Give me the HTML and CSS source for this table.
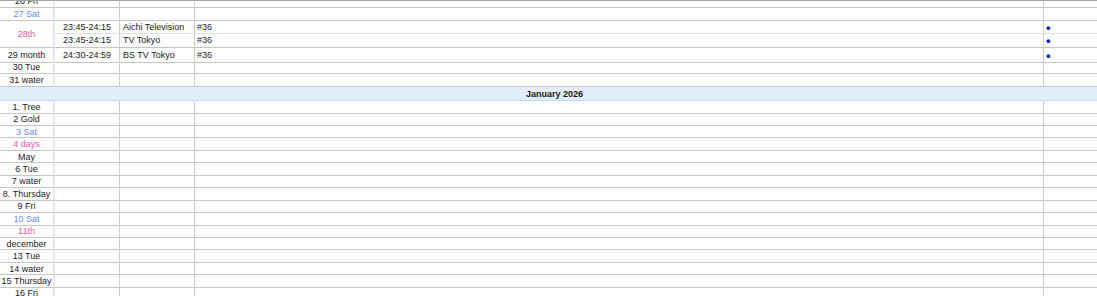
FILE: index.html
```html
<!DOCTYPE html>
<html>
<head>
<meta charset="utf-8">
<link rel="stylesheet" href="styles.css">
</head>
<body>
<div class="freeze"></div>
<div class="sheet">
  <div class="row tall"><div class="c date">26 Fri</div><div class="c t"></div><div class="c st"></div><div class="c ep"></div><div class="c mk"></div></div>
  <div class="row tall"><div class="c date sat">27 Sat</div><div class="c t"></div><div class="c st"></div><div class="c ep"></div><div class="c mk"></div></div>
  <div class="group">
    <div class="c date sun span2">28th</div>
    <div class="c t soft">23:45-24:15</div><div class="c st soft">Aichi Television</div><div class="c ep soft">#36</div><div class="c mk soft">•</div>
    <div class="c t">23:45-24:15</div><div class="c st">TV Tokyo</div><div class="c ep">#36</div><div class="c mk">•</div>
  </div>
  <div class="row tall"><div class="c date">29 month</div><div class="c t">24:30-24:59</div><div class="c st">BS TV Tokyo</div><div class="c ep">#36</div><div class="c mk">•</div></div>
  <div class="row tall"><div class="c date">30 Tue</div><div class="c t"></div><div class="c st"></div><div class="c ep"></div><div class="c mk"></div></div>
  <div class="row tall"><div class="c date">31 water</div><div class="c t"></div><div class="c st"></div><div class="c ep"></div><div class="c mk"></div></div>
  <div class="month">January 2026</div>
  <div class="row"><div class="c date">1. Tree</div><div class="c t"></div><div class="c st"></div><div class="c ep"></div><div class="c mk"></div></div>
  <div class="row"><div class="c date">2 Gold</div><div class="c t"></div><div class="c st"></div><div class="c ep"></div><div class="c mk"></div></div>
  <div class="row"><div class="c date sat">3 Sat</div><div class="c t"></div><div class="c st"></div><div class="c ep"></div><div class="c mk"></div></div>
  <div class="row"><div class="c date sun">4 days</div><div class="c t"></div><div class="c st"></div><div class="c ep"></div><div class="c mk"></div></div>
  <div class="row"><div class="c date">May</div><div class="c t"></div><div class="c st"></div><div class="c ep"></div><div class="c mk"></div></div>
  <div class="row"><div class="c date">6 Tue</div><div class="c t"></div><div class="c st"></div><div class="c ep"></div><div class="c mk"></div></div>
  <div class="row"><div class="c date">7 water</div><div class="c t"></div><div class="c st"></div><div class="c ep"></div><div class="c mk"></div></div>
  <div class="row"><div class="c date">8. Thursday</div><div class="c t"></div><div class="c st"></div><div class="c ep"></div><div class="c mk"></div></div>
  <div class="row"><div class="c date">9 Fri</div><div class="c t"></div><div class="c st"></div><div class="c ep"></div><div class="c mk"></div></div>
  <div class="row"><div class="c date sat">10 Sat</div><div class="c t"></div><div class="c st"></div><div class="c ep"></div><div class="c mk"></div></div>
  <div class="row"><div class="c date sun">11th</div><div class="c t"></div><div class="c st"></div><div class="c ep"></div><div class="c mk"></div></div>
  <div class="row"><div class="c date">december</div><div class="c t"></div><div class="c st"></div><div class="c ep"></div><div class="c mk"></div></div>
  <div class="row"><div class="c date">13 Tue</div><div class="c t"></div><div class="c st"></div><div class="c ep"></div><div class="c mk"></div></div>
  <div class="row"><div class="c date">14 water</div><div class="c t"></div><div class="c st"></div><div class="c ep"></div><div class="c mk"></div></div>
  <div class="row"><div class="c date">15 Thursday</div><div class="c t"></div><div class="c st"></div><div class="c ep"></div><div class="c mk"></div></div>
  <div class="row"><div class="c date">16 Fri</div><div class="c t"></div><div class="c st"></div><div class="c ep"></div><div class="c mk"></div></div>
</div>
</body>
</html>
```

FILE: styles.css
```css
html, body {
  margin: 0;
  padding: 0;
  background: #ffffff;
  overflow: hidden;
  width: 1097px;
  height: 296px;
}

body {
  position: relative;
  font-family: "Liberation Sans", Arial, sans-serif;
  font-size: 9px;
  color: #1c1c1c;
}

.freeze {
  position: absolute;
  left: 0;
  top: 0;
  width: 100%;
  height: 1px;
  background: #a6a6a6;
  z-index: 2;
}

.sheet {
  margin-top: -5.2px;
  display: flex;
  flex-direction: column;
}

.row,
.group {
  display: grid;
  grid-template-columns: 55px 65px 75px 849px 53px;
}

.row {
  height: 12.45px;
}

.row.tall {
  height: 13.2px;
}

.group {
  grid-template-rows: 13.2px 13.2px;
}

.c {
  box-sizing: border-box;
  border-bottom: 1px solid #c6c6c6;
  border-right: 1px solid #cfcfcf;
  display: flex;
  align-items: center;
  white-space: nowrap;
  overflow: hidden;
  line-height: 1;
  padding-top: 1px;
}

.c.soft {
  border-bottom-color: #e2e2e2;
}

.date {
  justify-content: center;
  border-right: 2px solid #e8e8e8;
}

.span2 {
  grid-row: span 2;
}

.sat {
  color: #6a8cf0;
}

.sun {
  color: #ea5aa6;
}

.t {
  justify-content: center;
}

.st {
  padding-left: 3px;
}

.ep {
  padding-left: 2px;
}

.mk {
  border-right: none;
  padding-left: 2px;
  color: #0a1fc8;
  font-size: 13px;
  font-weight: bold;
  line-height: 1;
  overflow: visible;
}

.month {
  box-sizing: border-box;
  height: 14px;
  background: #e3eefc;
  border-bottom: 1px solid #c4d8f6;
  display: flex;
  align-items: center;
  justify-content: center;
  padding-left: 12px;
  padding-top: 1px;
  font-weight: bold;
  color: #1a1a1a;
}
```
